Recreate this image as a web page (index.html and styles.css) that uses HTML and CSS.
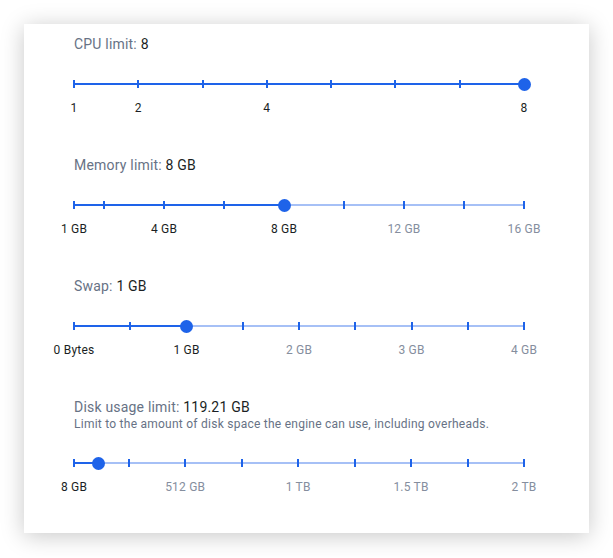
FILE: index.html
```html
<!DOCTYPE html>
<html lang="en">
<head>
    <meta charset="UTF-8">
    <meta name="viewport" content="width=device-width, initial-scale=1.0">
    <title>Resources</title>
    <link rel="stylesheet" href="styles.css">
</head>
<body>
    <div class="panel">
        <div class="setting">
            <div class="label">CPU limit: <span class="value">8</span></div>
            <div class="slider">
                <div class="track"></div>
                <div class="fill" style="width: 100%"></div>
                <span class="tick" style="left: 0%"></span>
                <span class="tick" style="left: 14.286%"></span>
                <span class="tick" style="left: 28.571%"></span>
                <span class="tick" style="left: 42.857%"></span>
                <span class="tick" style="left: 57.143%"></span>
                <span class="tick" style="left: 71.429%"></span>
                <span class="tick" style="left: 85.714%"></span>
                <span class="tick" style="left: 100%"></span>
                <span class="thumb" style="left: 100%"></span>
            </div>
            <div class="marks">
                <span class="mark on" style="left: 0%">1</span>
                <span class="mark on" style="left: 14.286%">2</span>
                <span class="mark on" style="left: 42.857%">4</span>
                <span class="mark on" style="left: 100%">8</span>
            </div>
        </div>

        <div class="setting">
            <div class="label">Memory limit: <span class="value">8 GB</span></div>
            <div class="slider">
                <div class="track"></div>
                <div class="fill" style="width: 46.667%"></div>
                <span class="tick" style="left: 0%"></span>
                <span class="tick" style="left: 6.667%"></span>
                <span class="tick" style="left: 20%"></span>
                <span class="tick" style="left: 33.333%"></span>
                <span class="tick" style="left: 46.667%"></span>
                <span class="tick" style="left: 60%"></span>
                <span class="tick" style="left: 73.333%"></span>
                <span class="tick" style="left: 86.667%"></span>
                <span class="tick" style="left: 100%"></span>
                <span class="thumb" style="left: 46.667%"></span>
            </div>
            <div class="marks">
                <span class="mark on" style="left: 0%">1 GB</span>
                <span class="mark on" style="left: 20%">4 GB</span>
                <span class="mark on" style="left: 46.667%">8 GB</span>
                <span class="mark" style="left: 73.333%">12 GB</span>
                <span class="mark" style="left: 100%">16 GB</span>
            </div>
        </div>

        <div class="setting">
            <div class="label">Swap: <span class="value">1 GB</span></div>
            <div class="slider">
                <div class="track"></div>
                <div class="fill" style="width: 25%"></div>
                <span class="tick" style="left: 0%"></span>
                <span class="tick" style="left: 12.5%"></span>
                <span class="tick" style="left: 25%"></span>
                <span class="tick" style="left: 37.5%"></span>
                <span class="tick" style="left: 50%"></span>
                <span class="tick" style="left: 62.5%"></span>
                <span class="tick" style="left: 75%"></span>
                <span class="tick" style="left: 87.5%"></span>
                <span class="tick" style="left: 100%"></span>
                <span class="thumb" style="left: 25%"></span>
            </div>
            <div class="marks">
                <span class="mark on" style="left: 0%">0 Bytes</span>
                <span class="mark on" style="left: 25%">1 GB</span>
                <span class="mark" style="left: 50%">2 GB</span>
                <span class="mark" style="left: 75%">3 GB</span>
                <span class="mark" style="left: 100%">4 GB</span>
            </div>
        </div>

        <div class="setting">
            <div class="label">Disk usage limit: <span class="value">119.21 GB</span></div>
            <div class="hint">Limit to the amount of disk space the engine can use, including overheads.</div>
            <div class="slider">
                <div class="track"></div>
                <div class="fill" style="width: 5.451%"></div>
                <span class="tick" style="left: 0%"></span>
                <span class="tick" style="left: 12.157%"></span>
                <span class="tick" style="left: 24.706%"></span>
                <span class="tick" style="left: 37.255%"></span>
                <span class="tick" style="left: 49.804%"></span>
                <span class="tick" style="left: 62.353%"></span>
                <span class="tick" style="left: 74.902%"></span>
                <span class="tick" style="left: 87.451%"></span>
                <span class="tick" style="left: 100%"></span>
                <span class="thumb" style="left: 5.451%"></span>
            </div>
            <div class="marks">
                <span class="mark on" style="left: 0%">8 GB</span>
                <span class="mark" style="left: 24.706%">512 GB</span>
                <span class="mark" style="left: 49.804%">1 TB</span>
                <span class="mark" style="left: 74.902%">1.5 TB</span>
                <span class="mark" style="left: 100%">2 TB</span>
            </div>
        </div>
    </div>
</body>
</html>
```

FILE: styles.css
```css
body {
    margin: 0;
    padding: 24px;
    background-color: #ffffff;
    font-family: Roboto, "Liberation Sans", sans-serif;
}

.panel {
    width: 565px;
    height: 509px;
    box-sizing: border-box;
    padding: 11px 65px 0 50px;
    background-color: #ffffff;
    box-shadow: 0 3px 22px rgba(0, 0, 0, 0.22);
}

.setting {
    margin-bottom: 40px;
}

.label {
    font-size: 14px;
    line-height: 18px;
    color: #677285;
    letter-spacing: 0.2px;
}

.value {
    color: #1b1f24;
}

.hint {
    font-size: 12px;
    line-height: 16px;
    color: #677285;
    letter-spacing: 0.25px;
}

.slider {
    position: relative;
    height: 24px;
    margin-top: 19px;
}

.track,
.fill {
    position: absolute;
    left: 0;
    top: 11px;
    height: 2px;
}

.track {
    right: 0;
    background-color: #a6c0f6;
}

.fill {
    background-color: #1e63e9;
}

.tick {
    position: absolute;
    top: 8px;
    width: 2px;
    height: 8px;
    margin-left: -1px;
    background-color: #1e63e9;
}

.thumb {
    position: absolute;
    top: 6px;
    width: 13px;
    height: 13px;
    margin-left: -6.5px;
    border-radius: 50%;
    background-color: #1e63e9;
}

.marks {
    position: relative;
    height: 16px;
    margin-top: 4px;
}

.mark {
    position: absolute;
    top: 0;
    transform: translateX(-50%);
    font-size: 12px;
    line-height: 16px;
    color: #858e9e;
    white-space: nowrap;
    letter-spacing: 0.2px;
}

.mark.on {
    color: #1b1f24;
}
```
